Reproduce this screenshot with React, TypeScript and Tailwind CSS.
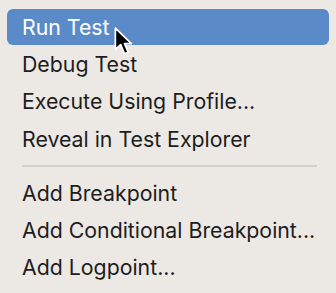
import React from "react";

const Item = ({ label, active }: { label: string; active?: boolean }) => (
  <div className="h-[37.33px] flex items-center px-[7px]">
    <div
      className={
        "w-full h-[36px] flex items-center pl-[15px] pt-[1px] rounded-[6px] " +
        (active ? "bg-[#5a8bc8] text-white" : "text-[#1d1d1d]")
      }
    >
      {label}
    </div>
  </div>
);

export default function App() {
  return (
    <div
      className="w-[336px] h-[293px] bg-[#ece8e4] pt-[8.33px] relative overflow-hidden text-[21.3px] leading-none"
      style={{ fontFamily: "Inter, 'Noto Sans', sans-serif" }}
    >
      <Item label="Run Test" active />
      <Item label="Debug Test" />
      <Item label="Execute Using Profile..." />
      <Item label="Reveal in Test Explorer" />
      <div className="h-[16.6px] flex items-center pl-[22px] pr-[19px]">
        <div className="w-full h-[2px] bg-[#d3cfcb]" />
      </div>
      <Item label="Add Breakpoint" />
      <Item label="Add Conditional Breakpoint..." />
      <Item label="Add Logpoint..." />
      <svg
        className="absolute left-[113px] top-[27px]"
        width="24"
        height="30"
        viewBox="0 0 22 28"
      >
        <path
          d="M2 1 L2 21 L7 16.5 L10.5 25 L14 23.5 L10.5 15.5 L17 15.5 Z"
          fill="#000"
          stroke="#fff"
          strokeWidth="1.6"
          strokeLinejoin="round"
        />
      </svg>
    </div>
  );
}
